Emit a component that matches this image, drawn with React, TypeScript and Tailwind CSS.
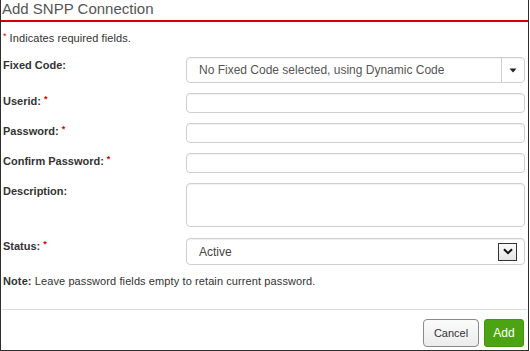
import React from "react";

const fieldBox =
  "w-full bg-white border border-[#cfcfcf] rounded-[4px] shadow-[inset_0_1px_1px_rgba(0,0,0,0.06)]";

function Req() {
  return <span className="text-[#e00000] text-[9px] align-top leading-none ml-[3px] relative top-[1px]">*</span>;
}

function Row({
  label,
  required,
  children,
  className,
}: {
  label: string;
  required?: boolean;
  children: React.ReactNode;
  className?: string;
}) {
  return (
    <div className={`flex items-start ${className ?? ""}`}>
      <div className="w-[183px] shrink-0 pt-[1px] text-[11px] leading-[14px] font-bold text-[#333]">
        {label}
        {required && <Req />}
      </div>
      <div className="flex-1 min-w-0">{children}</div>
    </div>
  );
}

export default function App() {
  return (
    <div className="w-[529px] h-[351px] bg-white border-x border-b border-[#2e2e2e] flex flex-col font-['Liberation_Sans',Arial,sans-serif]">
      {/* Header */}
      <div className="h-[22px] border-b-2 border-[#d40000] pl-[1px]">
        <h1 className="text-[15px] leading-[18px] text-[#555]">Add SNPP Connection</h1>
      </div>

      {/* Body */}
      <div className="pl-[2px] pr-[3px] flex flex-col">
        <p className="mt-[9px] text-[11px] leading-[14px] text-[#333] tracking-[0.08px]">
          <span className="text-[#e00000] text-[9px] align-top leading-none relative top-[1px] mr-[3px]">*</span>
          Indicates required fields.
        </p>

        <Row label="Fixed Code:" className="mt-[12px]">
          <div className={`${fieldBox} h-[26px] flex items-center`}>
            <span className="flex-1 pl-[12px] text-[12px] text-[#555] truncate">
              No Fixed Code selected, using Dynamic Code
            </span>
            <div className="w-[23px] h-full border-l border-[#cfcfcf] flex items-center justify-center">
              <svg width="8" height="5" viewBox="0 0 8 5">
                <path d="M0.5 0.5 H7.5 L4 4.5 Z" fill="#222" />
              </svg>
            </div>
          </div>
        </Row>

        <Row label="Userid:" required className="mt-[10px]">
          <div className={`${fieldBox} h-[20px]`} />
        </Row>

        <Row label="Password:" required className="mt-[10px]">
          <div className={`${fieldBox} h-[20px]`} />
        </Row>

        <Row label="Confirm Password:" required className="mt-[10px]">
          <div className={`${fieldBox} h-[20px]`} />
        </Row>

        <Row label="Description:" className="mt-[10px]">
          <div className={`${fieldBox} h-[44px]`} />
        </Row>

        <Row label="Status:" required className="mt-[11px]">
          <div className={`${fieldBox} h-[27px] flex items-center`}>
            <span className="flex-1 pl-[12px] text-[12px] text-[#444]">Active</span>
            <div className="mr-[7px] w-[19px] h-[18px] border border-[#333] bg-gradient-to-b from-[#fafafa] to-[#e4e4e4] flex items-center justify-center">
              <svg width="10" height="7" viewBox="0 0 10 7">
                <path d="M1 1.2 L5 5.2 L9 1.2" fill="none" stroke="#111" strokeWidth="2" />
              </svg>
            </div>
          </div>
        </Row>

        <p className="mt-[9px] text-[11px] leading-[14px] text-[#333] tracking-[0.1px]">
          <span className="font-bold">Note:</span> Leave password fields empty to retain current password.
        </p>
      </div>

      <div className="flex-1" />

      {/* Footer */}
      <div className="h-[41px] border-t border-[#dcdcdc] mx-[1px] pt-[9px] pr-[3px] flex justify-end items-start gap-[5px]">
        <button className="h-[28px] w-[56px] rounded-[4px] border border-[#8a8a8a] bg-gradient-to-b from-[#fbfbfb] to-[#ececec] text-[11px] text-[#333]">
          Cancel
        </button>
        <button className="h-[28px] w-[40px] rounded-[3px] border border-[#44960c] bg-[#4da413] text-[12px] text-white">
          Add
        </button>
      </div>
    </div>
  );
}
